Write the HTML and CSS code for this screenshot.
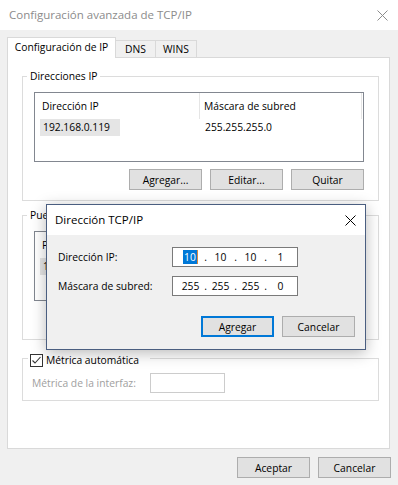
FILE: index.html
```html
<!DOCTYPE html>
<html>
<head>
<meta http-equiv="Content-Type" content="text/html; charset=utf-8"/>
<title>Configuración avanzada de TCP/IP</title>
<link rel="stylesheet" href="styles.css">
</head>

<body>

<div class="titlebar">
<span class="title">Configuración avanzada de TCP/IP</span>
<svg class="close" width="11" height="11" viewBox="0 0 11 11"><path d="M0.5 0.5L10.5 10.5M10.5 0.5L0.5 10.5"/></svg>
</div>

<div class="window">

<div class="tabs">
<div class="tab active">Configuración de IP</div>
<div class="tab dns">DNS</div>
<div class="tab wins">WINS</div>
</div>

<div class="panel">

<div class="group">
<span class="legend">Direcciones IP</span>
<div class="list">
<div class="list-head"><span class="col1">Dirección IP</span><span class="col2">Máscara de subred</span></div>
<div class="list-row"><span class="col1"><span class="sel">192.168.0.119</span></span><span class="col2">255.255.255.0</span></div>
</div>
<div class="btnrow">
<button>Agregar...</button>
<button>Editar...</button>
<button>Quitar</button>
</div>
</div>

<div class="group">
<span class="legend">Puertas de enlace predeterminadas:</span>
<div class="list">
<div class="list-head"><span class="col1">Puerta de enlace</span><span class="col2">Métrica</span></div>
<div class="list-row"><span class="col1"><span class="sel">192.168.0.1</span></span><span class="col2">Automático</span></div>
</div>
<div class="btnrow">
<button>Agregar...</button>
<button>Editar...</button>
<button>Quitar</button>
</div>
</div>

<div class="group metric">
<label class="legend check-legend"><span class="check"><svg width="11" height="11" viewBox="0 0 11 11"><path d="M1.5 5.5L4 8L9.5 2"/></svg></span>Métrica automática</label>
<div class="metric-row">
<span class="disabled">Métrica de la interfaz:</span>
<span class="input"></span>
</div>
</div>

</div>

<div class="footer">
<button>Aceptar</button>
<button>Cancelar</button>
</div>

</div>

<div class="dialog">
<div class="dlg-title">
<span>Dirección TCP/IP</span>
<svg class="dlg-close" width="11" height="11" viewBox="0 0 11 11"><path d="M0.5 0.5L10.5 10.5M10.5 0.5L0.5 10.5"/></svg>
</div>
<div class="dlg-body">
<div class="field-row">
<span class="field-label">Dirección IP:</span>
<div class="ipbox"><span class="seg"><span class="hl">10</span></span><span class="dot">.</span><span class="seg">10</span><span class="dot">.</span><span class="seg">10</span><span class="dot">.</span><span class="seg">1</span></div>
</div>
<div class="field-row">
<span class="field-label">Máscara de subred:</span>
<div class="ipbox"><span class="seg">255</span><span class="dot">.</span><span class="seg">255</span><span class="dot">.</span><span class="seg">255</span><span class="dot">.</span><span class="seg">0</span></div>
</div>
<div class="dlg-buttons">
<button class="default">Agregar</button>
<button>Cancelar</button>
</div>
</div>
</div>

</body>
</html>
```

FILE: styles.css
```css
* {
   box-sizing: border-box;
}

body {
   margin: 0;
   width: 398px;
   height: 485px;
   position: relative;
   overflow: hidden;
   background-color: #f0f0f0;
   font-family: "Segoe UI", "Open Sans", sans-serif;
   font-size: 10.3px;
   line-height: 14px;
   color: #000;
}

button {
   width: 73px;
   height: 21px;
   padding: 0;
   font: inherit;
   color: #000;
   background-color: #e1e1e1;
   border: 1px solid #adadad;
}

/* title bar */

.titlebar {
   height: 30px;
   background-color: white;
   display: flex;
   align-items: center;
   justify-content: space-between;
   padding: 0 10px 0 9px;
}

.titlebar .title {
   font-size: 11.5px;
   color: #8c8c8c;
}

.close path {
   stroke: #8c8c8c;
   stroke-width: 1;
   fill: none;
}

.window {
   padding: 7px 8px 0 7px;
}

/* tabs */

.tabs {
   display: flex;
   align-items: flex-end;
   height: 20px;
}

.tab {
   height: 17px;
   margin-left: -1px;
   border: 1px solid #d9d9d9;
   border-bottom: none;
   background-color: #f0f0f0;
   text-align: center;
   line-height: 16px;
}

.tab.active {
   position: relative;
   z-index: 1;
   width: 109px;
   height: 21px;
   margin-left: 0;
   margin-bottom: -1px;
   background-color: white;
   line-height: 19px;
}

.tab.dns {
   width: 41px;
}

.tab.wins {
   width: 42px;
}

.panel {
   height: 392px;
   background-color: white;
   border: 1px solid #d9d9d9;
   padding: 18px 10px 0 14px;
}

/* group boxes */

.group {
   position: relative;
   border: 1px solid #dcdcdc;
   padding: 15px 14px 10px 11px;
}

.group + .group {
   margin-top: 14px;
}

.group.metric {
   margin-top: 18px;
   padding: 14px 14px 7px 9px;
}

.legend {
   position: absolute;
   top: -8px;
   left: 4px;
   padding: 0 3px;
   background-color: white;
   line-height: 14px;
   white-space: nowrap;
}

.check-legend {
   top: -5px;
   left: 5px;
   width: 122px;
   height: 13px;
   padding: 0 0 0 2px;
   display: flex;
   align-items: center;
   line-height: 13px;
}

.check {
   width: 13px;
   height: 13px;
   margin-right: 3px;
   border: 1px solid #333;
   background-color: white;
   display: flex;
}

.check path {
   stroke: #333;
   stroke-width: 1.1;
   fill: none;
}

/* list views */

.list {
   height: 70px;
   border: 1px solid #828790;
}

.list-head {
   display: flex;
   height: 26px;
   line-height: 26px;
}

.list-head .col1 {
   width: 165px;
   padding-left: 7px;
   border-right: 1px solid #e5e5e5;
}

.list-head .col2 {
   width: 162px;
   padding-left: 4px;
   border-right: 1px solid #e5e5e5;
}

.list-row {
   display: flex;
   height: 17px;
   line-height: 17px;
}

.list-row .col1 {
   width: 165px;
   padding-left: 5px;
}

.list-row .col2 {
   padding-left: 5px;
}

.sel {
   display: inline-block;
   width: 80px;
   padding-left: 3px;
   background-color: #e5e5e5;
}

.btnrow {
   display: flex;
   justify-content: flex-end;
   gap: 8px;
   margin-top: 7px;
}

.metric-row {
   display: flex;
   align-items: center;
}

.disabled {
   width: 118px;
   color: #a0a0a0;
}

.input {
   width: 75px;
   height: 20px;
   border: 1px solid #cccccc;
   background-color: white;
}

.footer {
   display: flex;
   justify-content: flex-end;
   gap: 8px;
   margin-top: 8px;
   margin-right: -1px;
}

/* TCP/IP address dialog */

.dialog {
   position: absolute;
   left: 46px;
   top: 204px;
   width: 320px;
   height: 146px;
   background-color: #f0f0f0;
   border: 1px solid #4a5e80;
   box-shadow: 0 3px 14px rgba(0, 0, 0, 0.28);
}

.dlg-title {
   height: 30px;
   background-color: white;
   display: flex;
   align-items: center;
   justify-content: space-between;
   padding: 0 9px 0 8px;
   font-size: 11.5px;
}

.dlg-close path {
   stroke: #000;
   stroke-width: 1;
   fill: none;
}

.dlg-body {
   padding: 12px 10px 12px 11px;
}

.field-row {
   display: flex;
   align-items: center;
   height: 20px;
}

.field-row + .field-row {
   margin-top: 9px;
}

.field-label {
   width: 114px;
}

.ipbox {
   width: 126px;
   height: 20px;
   padding-left: 5px;
   border: 1px solid #7a7a7a;
   background-color: white;
   display: flex;
   align-items: center;
}

.seg {
   width: 25px;
   text-align: center;
}

.dot {
   width: 5px;
   text-align: center;
}

.hl {
   background-color: #0078d7;
   color: white;
   padding: 0 1px;
   border-right: 1px solid #d9893c;
}

.dlg-buttons {
   display: flex;
   justify-content: flex-end;
   gap: 8px;
   margin-top: 20px;
}

button.default {
   border: 2px solid #0078d7;
}
```
